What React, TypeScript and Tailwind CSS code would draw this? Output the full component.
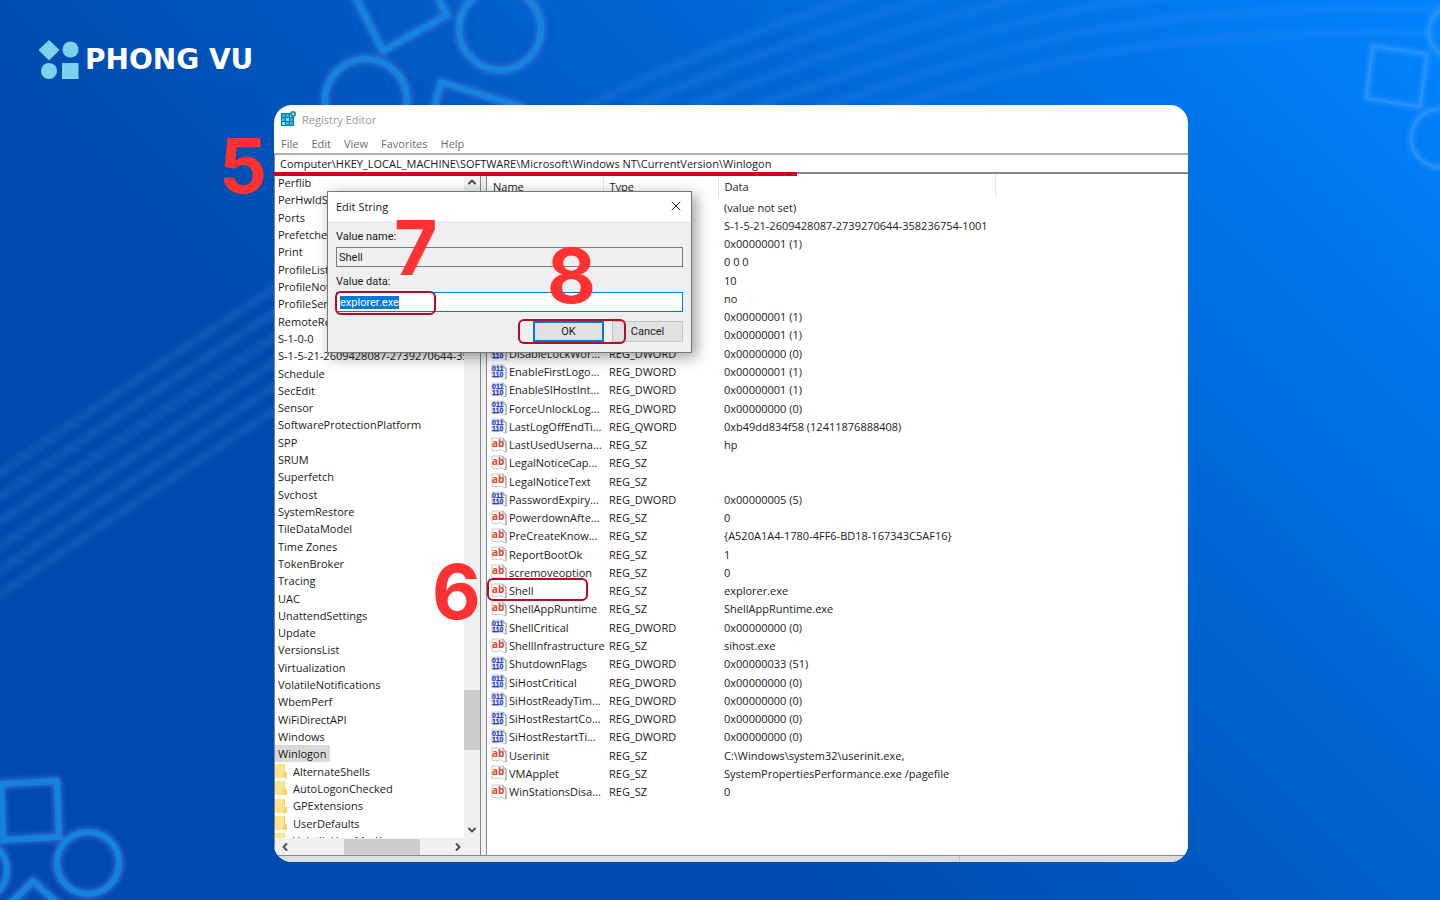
import { useEffect, useRef } from "react";
import { ChevronDown, ChevronLeft, ChevronRight, ChevronUp, X } from "lucide-react";

type ValueType = "REG_SZ" | "REG_DWORD" | "REG_QWORD";

interface RegistryValue {
  name: string;
  type: ValueType;
  data: string;
}

const menus = ["File", "Edit", "View", "Favorites", "Help"];

const keys = [
  "Perflib",
  "PerHwIdStorage",
  "Ports",
  "Prefetcher",
  "Print",
  "ProfileList",
  "ProfileNotification",
  "ProfileService",
  "RemoteRegistry",
  "S-1-0-0",
  "S-1-5-21-2609428087-2739270644-358236754-1001",
  "Schedule",
  "SecEdit",
  "Sensor",
  "SoftwareProtectionPlatform",
  "SPP",
  "SRUM",
  "Superfetch",
  "Svchost",
  "SystemRestore",
  "TileDataModel",
  "Time Zones",
  "TokenBroker",
  "Tracing",
  "UAC",
  "UnattendSettings",
  "Update",
  "VersionsList",
  "Virtualization",
  "VolatileNotifications",
  "WbemPerf",
  "WiFiDirectAPI",
  "Windows",
  "Winlogon",
];

const subKeys = [
  "AlternateShells",
  "AutoLogonChecked",
  "GPExtensions",
  "UserDefaults",
  "VolatileUserMgrKey",
];

const values: RegistryValue[] = [
  { name: "(Default)", type: "REG_SZ", data: "(value not set)" },
  { name: "AutoLogonSID", type: "REG_SZ", data: "S-1-5-21-2609428087-2739270644-358236754-1001" },
  { name: "AutoRestartShell", type: "REG_DWORD", data: "0x00000001 (1)" },
  { name: "Background", type: "REG_SZ", data: "0 0 0" },
  { name: "CachedLogons...", type: "REG_SZ", data: "10" },
  { name: "DebugServerC...", type: "REG_SZ", data: "no" },
  { name: "DisableBackB...", type: "REG_DWORD", data: "0x00000001 (1)" },
  { name: "DisableCAD", type: "REG_DWORD", data: "0x00000001 (1)" },
  { name: "DisableLockWor...", type: "REG_DWORD", data: "0x00000000 (0)" },
  { name: "EnableFirstLogo...", type: "REG_DWORD", data: "0x00000001 (1)" },
  { name: "EnableSIHostInt...", type: "REG_DWORD", data: "0x00000001 (1)" },
  { name: "ForceUnlockLog...", type: "REG_DWORD", data: "0x00000000 (0)" },
  { name: "LastLogOffEndTi...", type: "REG_QWORD", data: "0xb49dd834f58 (12411876888408)" },
  { name: "LastUsedUserna...", type: "REG_SZ", data: "hp" },
  { name: "LegalNoticeCap...", type: "REG_SZ", data: "" },
  { name: "LegalNoticeText", type: "REG_SZ", data: "" },
  { name: "PasswordExpiry...", type: "REG_DWORD", data: "0x00000005 (5)" },
  { name: "PowerdownAfte...", type: "REG_SZ", data: "0" },
  { name: "PreCreateKnow...", type: "REG_SZ", data: "{A520A1A4-1780-4FF6-BD18-167343C5AF16}" },
  { name: "ReportBootOk", type: "REG_SZ", data: "1" },
  { name: "scremoveoption", type: "REG_SZ", data: "0" },
  { name: "Shell", type: "REG_SZ", data: "explorer.exe" },
  { name: "ShellAppRuntime", type: "REG_SZ", data: "ShellAppRuntime.exe" },
  { name: "ShellCritical", type: "REG_DWORD", data: "0x00000000 (0)" },
  { name: "ShellInfrastructure", type: "REG_SZ", data: "sihost.exe" },
  { name: "ShutdownFlags", type: "REG_DWORD", data: "0x00000033 (51)" },
  { name: "SiHostCritical", type: "REG_DWORD", data: "0x00000000 (0)" },
  { name: "SiHostReadyTim...", type: "REG_DWORD", data: "0x00000000 (0)" },
  { name: "SiHostRestartCo...", type: "REG_DWORD", data: "0x00000000 (0)" },
  { name: "SiHostRestartTi...", type: "REG_DWORD", data: "0x00000000 (0)" },
  { name: "Userinit", type: "REG_SZ", data: "C:\\Windows\\system32\\userinit.exe," },
  { name: "VMApplet", type: "REG_SZ", data: "SystemPropertiesPerformance.exe /pagefile" },
  { name: "WinStationsDisa...", type: "REG_SZ", data: "0" },
];

const waveOffsets = [0, -24, -48, -73, -98, -122];

function Backdrop() {
  return (
    <svg
      className="absolute inset-0 h-full w-full"
      viewBox="0 0 1440 900"
      preserveAspectRatio="xMidYMid slice"
      fill="none"
      aria-hidden="true"
    >
      <defs>
        <filter id="soft" x="-20%" y="-20%" width="140%" height="140%">
          <feGaussianBlur stdDeviation="2" />
        </filter>
        <g id="shapes-top">
          <path d="M352 -10 383 51 447 15 433 -12" />
          <circle cx="366" cy="100" r="41" />
          <circle cx="500" cy="29" r="41" />
          <path d="M430 125 441 82 525 108" />
        </g>
        <g id="shapes-bottom">
          <path d="M1 784 57 781 59 837 3 840Z" />
          <circle cx="88" cy="863" r="31" />
          <circle cx="-22" cy="870" r="29" />
          <path d="M8 906 33 881 60 906" />
        </g>
        <g id="shapes-right">
          <path d="M1373 46 1427 54 1420 107 1366 98Z" />
          <circle cx="1456" cy="32" r="27" />
          <circle cx="1440" cy="138" r="29" />
        </g>
      </defs>
      <g stroke="#4a8cf0" strokeOpacity="0.17" strokeWidth="10" filter="url(#soft)">
        {waveOffsets.map((offset) => (
          <path
            key={offset}
            transform={`translate(0 ${offset})`}
            d="M-20 608C80 540 180 472 272 412S480 280 600 222S830 125 960 87S1180 40 1260 36S1400 33 1460 34"
          />
        ))}
      </g>
      <g strokeLinejoin="round">
        <g stroke="#4a78e8" strokeOpacity="0.6" strokeWidth="10" filter="url(#soft)">
          <use href="#shapes-top" />
          <use href="#shapes-bottom" />
        </g>
        <g stroke="#1286dc" strokeOpacity="0.9" strokeWidth="6">
          <use href="#shapes-top" />
          <use href="#shapes-bottom" />
        </g>
        <use
          href="#shapes-right"
          stroke="#3c9cff"
          strokeOpacity="0.5"
          strokeWidth="7"
          filter="url(#soft)"
        />
        <use href="#shapes-right" stroke="#2c98f8" strokeOpacity="0.7" strokeWidth="2" />
      </g>
    </svg>
  );
}

function Logo() {
  return (
    <a href="#" className="flex items-center gap-1.5">
      <svg className="h-10 w-10" viewBox="0 0 40 40" fill="#7dd3ee" aria-hidden="true">
        <path d="M10 0 20.500 10 10 20.500 -0.500 10Z" />
        <circle cx="31.500" cy="9.500" r="8" />
        <circle cx="10" cy="31" r="8" />
        <rect x="23" y="23" width="16.500" height="16" />
      </svg>
      <span className="font-['DejaVu_Sans',sans-serif] text-[28px] leading-10 font-bold text-white">
        PHONG VU
      </span>
    </a>
  );
}

function RegeditIcon() {
  return (
    <svg className="h-4 w-4" viewBox="0 0 16 16" aria-hidden="true">
      <path d="M0 2H9V6H13V15H0Z" fill="#0b78ab" />
      <g fill="#2fb9e8">
        <rect x="1" y="3" width="3" height="3" />
        <rect x="5" y="3" width="3" height="3" />
        <rect x="1" y="7" width="3" height="3" />
        <rect x="5" y="7" width="3" height="3" fill="#8be6fb" />
        <rect x="9" y="7" width="3" height="3" />
        <rect x="1" y="11" width="3" height="3" fill="#8be6fb" />
        <rect x="5" y="11" width="3" height="3" />
        <rect x="9" y="11" width="3" height="3" />
      </g>
      <circle cx="12" cy="3" r="2" fill="#fff" stroke="#1b90ad" strokeWidth="2" />
    </svg>
  );
}

function ValueIcon({ type }: { type: ValueType }) {
  const isString = type === "REG_SZ";
  return (
    <svg className="h-4 w-4 shrink-0" viewBox="0 0 16 16" aria-hidden="true">
      <path
        d="M1 1H12L15 4V15C12 15 11 12 8 13S4 14 1 13Z"
        fill="#fff"
        stroke="#c4c4c4"
        strokeWidth="1"
      />
      <path d="M12 1V4H15V15" fill="none" stroke="#9a9a9a" strokeWidth="1" />
      {isString ? (
        <text x="1" y="10" fill="#d8452a" className="font-['Open_Sans',sans-serif] text-[10px] font-bold">
          ab
        </text>
      ) : (
        <g
          fill="#1f3fd0"
          stroke="#1f3fd0"
          strokeWidth="0.300"
          className="font-['Liberation_Sans',sans-serif] text-[7px] font-bold"
        >
          <text x="1" y="7">011</text>
          <text x="1" y="13">110</text>
        </g>
      )}
    </svg>
  );
}

function FolderIcon() {
  return (
    <svg className="h-4 w-3 shrink-0" viewBox="0 0 12 16" aria-hidden="true">
      <path d="M0 1H10V10H12V15H0Z" fill="#ffe391" />
      <path d="M10 1V9H12V15H8V11H9V1Z" fill="#f6d271" />
    </svg>
  );
}

function KeyTree() {
  return (
    <div className="flex w-[206px] shrink-0 flex-col border-r border-[#828790]">
      <div className="flex h-[664px]">
        <div className="min-w-0 flex-1 overflow-hidden">
          <ul className="grid h-[675px] auto-rows-fr whitespace-nowrap">
            {keys.map((key) => (
              <li key={key} className="flex items-center">
                <span className={key === "Winlogon" ? "bg-[#d9d9d9] py-px pr-1 pl-[3px]" : "pl-[3px]"}>
                  {key}
                </span>
              </li>
            ))}
            {subKeys.map((key) => (
              <li key={key} className="flex items-center gap-1.5">
                <FolderIcon />
                {key}
              </li>
            ))}
          </ul>
        </div>
        <div className="flex w-4 flex-col items-center justify-between bg-[#f0f0f0] text-[#505050]">
          <ChevronUp className="h-4 w-3" strokeWidth={4} />
          <div className="mt-auto mb-[76px] h-[60px] w-full bg-[#cdcdcd]" />
          <ChevronDown className="-mt-1 h-4 w-3" strokeWidth={4} />
        </div>
      </div>
      <div className="flex flex-1 items-center bg-[#f0f0f0] pr-4 text-[#505050]">
        <ChevronLeft className="mx-1 h-3 w-3" strokeWidth={4} />
        <div className="ml-[49px] h-4 w-[76px] bg-[#cdcdcd]" />
        <ChevronRight className="ml-auto h-3 w-3" strokeWidth={4} />
      </div>
    </div>
  );
}

function ValueTable() {
  return (
    <div className="min-w-0 flex-1 border-l border-[#828790]">
      <table className="h-[627px] w-full table-fixed border-collapse text-left whitespace-nowrap">
        <thead>
          <tr className="h-6">
            <th className="w-[116px] border-r border-[#e5e5e5] pl-1.5 font-normal">Name</th>
            <th className="w-[115px] border-r border-[#e5e5e5] pl-1.5 font-normal">Type</th>
            <th className="w-[277px] border-r border-[#e5e5e5] pl-1.5 font-normal">Data</th>
            <th aria-hidden="true" />
          </tr>
        </thead>
        <tbody>
          {values.map((value) => (
            <tr key={value.name} className="h-[18px]">
              <td className="p-0 pl-1">
                <div className="flex items-center gap-0.5">
                  <ValueIcon type={value.type} />
                  <span>{value.name}</span>
                </div>
              </td>
              <td className="p-0 pl-1.5">{value.type}</td>
              <td className="p-0 pl-1.5" colSpan={2}>
                {value.data}
              </td>
            </tr>
          ))}
        </tbody>
      </table>
    </div>
  );
}

function EditStringDialog() {
  const dataRef = useRef<HTMLInputElement>(null);

  useEffect(() => {
    dataRef.current?.focus();
    dataRef.current?.select();
  }, []);

  return (
    <div
      role="dialog"
      aria-labelledby="dialog-title"
      className="absolute top-[86px] left-[53px] w-[365px] border border-[#777] bg-[#efefef] shadow-[4px_4px_14px_rgba(0,0,0,0.4)]"
    >
      <div className="flex h-[29px] items-center justify-between bg-white pr-[7px] pb-px pl-2">
        <h2 id="dialog-title">Edit String</h2>
        <button type="button" aria-label="Close">
          <X className="h-4 w-4 text-[#222]" strokeWidth={1.5} />
        </button>
      </div>
      <form
        className="flex flex-col px-2 pt-2 pb-2.5 font-[Roboto,sans-serif] text-[11px] leading-4"
        onSubmit={(event) => event.preventDefault()}
      >
        <label htmlFor="value-name">Value name:</label>
        <input
          id="value-name"
          readOnly
          defaultValue="Shell"
          className="mt-0.5 h-5 border border-[#7a7a7a] bg-[#efefef] px-0.5 outline-none"
        />
        <label htmlFor="value-data" className="mt-[7px]">
          Value data:
        </label>
        <input
          id="value-data"
          ref={dataRef}
          defaultValue="explorer.exe"
          className="mt-0.5 h-5 border border-[#0078d7] bg-white px-[3px] outline-none selection:bg-[#0078d7] selection:text-white"
        />
        <div className="mt-[9px] flex justify-end gap-2">
          <button type="submit" className="h-[21px] w-[71px] border-2 border-[#0078d7] bg-[#e1e1e1]">
            OK
          </button>
          <button type="button" className="h-[21px] w-[71px] border border-[#c4c4c4] bg-[#e1e1e1]">
            Cancel
          </button>
        </div>
      </form>
    </div>
  );
}

/** Numbered steps and red outlines that lie over the window */
function Annotations() {
  return (
    <div className="pointer-events-none font-[Inter,sans-serif] text-[75px] leading-none font-bold text-[#ff3131]">
      <div className="absolute top-[67px] left-0 h-1 w-[523px] bg-[#d0021b]" />
      <div className="absolute top-[186px] left-[61px] h-6 w-[101px] rounded-md border-2 border-[#b8082c]" />
      <div className="absolute top-[214px] left-[244px] h-[25px] w-[108px] rounded-md border-2 border-[#b8082c]" />
      <div className="absolute top-[473px] left-[213px] h-[23px] w-[101px] rounded-md border-2 border-[#b8082c]" />
      <span className="absolute top-[23px] -left-[55px]">5</span>
      <span className="absolute top-[449px] left-[158px]">6</span>
      <span className="absolute top-[105px] left-[120px]">7</span>
      <span className="absolute top-[133px] left-[273px]">8</span>
    </div>
  );
}

function RegistryWindow() {
  return (
    <div className="relative text-[11px] leading-[15px] text-[#1a1a1a]">
      <div className="overflow-hidden rounded-[18px] bg-white">
        <div className="flex h-7 items-center gap-[5px] pl-[7px] text-[#999]">
          <RegeditIcon />
          <h1>Registry Editor</h1>
        </div>
        <nav className="flex h-5 items-center gap-[13px] pl-[7px] text-[#6d6d6d]">
          {menus.map((menu) => (
            <button key={menu} type="button">
              {menu}
            </button>
          ))}
        </nav>
        <input
          aria-label="Registry path"
          readOnly
          defaultValue="Computer\HKEY_LOCAL_MACHINE\SOFTWARE\Microsoft\Windows NT\CurrentVersion\Winlogon"
          className="block h-[21px] w-full border-t-2 border-b-2 border-l border-t-[#b0b0b0] border-b-[#888] border-l-[#888] px-[5px] outline-none"
        />
        <div className="flex h-[682px] gap-[5px] border-b border-l border-[#828790] bg-[#f0f0f0] *:bg-white">
          <KeyTree />
          <ValueTable />
        </div>
        <div className="flex h-1.5 bg-[#dcdedb]">
          <div className="w-3/4 border-r border-[#c4c6c3]" />
        </div>
      </div>
      <EditStringDialog />
      <Annotations />
    </div>
  );
}

export default function App() {
  return (
    <div className="relative min-h-screen overflow-hidden bg-linear-45 from-[#004aad] from-35% to-[#0084ff] font-['Open_Sans','Noto_Sans',sans-serif]">
      <Backdrop />
      <header className="relative flex h-[105px] items-start pt-10 pl-[39px]">
        <Logo />
      </header>
      <main className="relative pr-[252px] pb-[38px] pl-[274px]">
        <RegistryWindow />
      </main>
    </div>
  );
}
